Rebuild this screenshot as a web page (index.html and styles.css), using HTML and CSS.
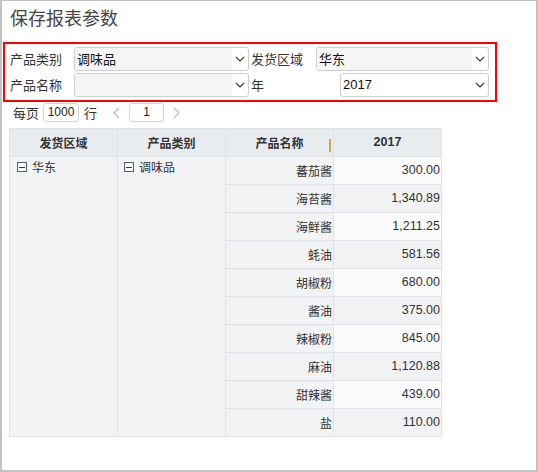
FILE: index.html
```html
<!DOCTYPE html>
<html lang="zh">
<head>
<meta charset="utf-8">
<title>保存报表参数</title>
<link rel="stylesheet" href="styles.css">
</head>
<body>
<div class="page">
  <div class="title">保存报表参数</div>
  <div class="params">
    <div class="prow">
      <span class="lbl w64">产品类别</span>
      <div class="sel w175 filled"><span class="val">调味品</span><span class="arr"><svg width="10" height="6" viewBox="0 0 10 6"><polyline points="0.8,0.8 5,5 9.2,0.8" fill="none" stroke="#333" stroke-width="1.2"/></svg></span></div>
      <span class="lbl w65 ml2">发货区域</span>
      <div class="sel w173 filled"><span class="val">华东</span><span class="arr"><svg width="10" height="6" viewBox="0 0 10 6"><polyline points="0.8,0.8 5,5 9.2,0.8" fill="none" stroke="#333" stroke-width="1.2"/></svg></span></div>
    </div>
    <div class="prow">
      <span class="lbl w64">产品名称</span>
      <div class="sel w175 filled"><span class="val"></span><span class="arr"><svg width="10" height="6" viewBox="0 0 10 6"><polyline points="0.8,0.8 5,5 9.2,0.8" fill="none" stroke="#333" stroke-width="1.2"/></svg></span></div>
      <span class="lbl w89 ml2">年</span>
      <div class="sel w149"><span class="val num">2017</span><span class="arr"><svg width="10" height="6" viewBox="0 0 10 6"><polyline points="0.8,0.8 5,5 9.2,0.8" fill="none" stroke="#333" stroke-width="1.2"/></svg></span></div>
    </div>
  </div>
  <div class="toolbar">
    <span class="tlbl">每页</span>
    <span class="box bsize">1000</span>
    <span class="tlbl row-l">行</span>
    <span class="nav prev"><svg width="7" height="12" viewBox="0 0 7 12"><polyline points="6,1 1,6 6,11" fill="none" stroke="#b8bcc2" stroke-width="1.2"/></svg></span>
    <span class="box bpage">1</span>
    <span class="nav next"><svg width="7" height="12" viewBox="0 0 7 12"><polyline points="1,1 6,6 1,11" fill="none" stroke="#b8bcc2" stroke-width="1.2"/></svg></span>
  </div>
  <div class="grid">
    <div class="hd">发货区域</div>
    <div class="hd">产品类别</div>
    <div class="hd hd-name">产品名称<span class="resize"></span></div>
    <div class="hd num">2017</div>
    <div class="merged c1"><span class="tog"></span>华东</div>
    <div class="merged c2"><span class="tog"></span>调味品</div>
    <div class="name">蕃茄酱</div><div class="v odd">300.00</div>
    <div class="name">海苔酱</div><div class="v">1,340.89</div>
    <div class="name">海鲜酱</div><div class="v odd">1,211.25</div>
    <div class="name">蚝油</div><div class="v">581.56</div>
    <div class="name">胡椒粉</div><div class="v odd">680.00</div>
    <div class="name">酱油</div><div class="v">375.00</div>
    <div class="name">辣椒粉</div><div class="v odd">845.00</div>
    <div class="name">麻油</div><div class="v">1,120.88</div>
    <div class="name">甜辣酱</div><div class="v odd">439.00</div>
    <div class="name">盐</div><div class="v">110.00</div>
  </div>
</div>
</body>
</html>
```
FILE: styles.css
```css
html, body {
  margin: 0;
  padding: 0;
  background: #fff;
}
body {
  font-family: "Noto Sans CJK SC", "Noto Sans", sans-serif;
  color: #333;
}
.page {
  width: 538px;
  height: 472px;
  box-sizing: border-box;
  border: 2px solid #c2c2c2;
  border-top-width: 1px;
  padding-top: 4px;
}
.title {
  height: 24px;
  line-height: 24px;
  font-size: 18px;
  color: #444;
  padding-left: 8px;
}
.params {
  margin: 13px 0 0 1px;
  width: 494px;
  height: 60px;
  box-sizing: border-box;
  border: 2px solid #ff0000;
  padding: 3px 6px 3px 5px;
  display: flex;
  flex-direction: column;
  gap: 2px;
}
.prow {
  display: flex;
  height: 24px;
  align-items: stretch;
}
.lbl {
  font-size: 13px;
  line-height: 24px;
  box-sizing: border-box;
  color: #333;
}
.w64 { width: 64px; }
.w65 { width: 65px; }
.w89 { width: 89px; }
.ml2 { margin-left: 2px; }
.sel {
  box-sizing: border-box;
  height: 24px;
  border: 1px solid #cfcfcf;
  border-radius: 3px;
  display: flex;
  background: #fff;
  overflow: hidden;
}
.w175 { width: 175px; }
.w173 { width: 173px; }
.w149 { width: 149px; }
.sel .val {
  flex: 1;
  font-size: 13px;
  line-height: 22px;
  padding-left: 2px;
  color: #111;
}
.sel.filled .val {
  background: #f5f5f5;
}
.sel .num {
  font-family: "Liberation Sans", sans-serif;
}
.sel .arr {
  width: 16px;
  display: flex;
  align-items: center;
  justify-content: flex-start;
  padding-left: 3px;
  box-sizing: border-box;
}
.toolbar {
  margin: 1px 0 0 11px;
  height: 19px;
  display: flex;
  align-items: center;
  font-size: 13px;
}
.tlbl {
  line-height: 19px;
}
.box {
  box-sizing: border-box;
  height: 19px;
  border: 1px solid #d4d4d4;
  border-radius: 3px;
  font-family: "Liberation Sans", sans-serif;
  font-size: 12px;
  line-height: 17px;
  text-align: center;
  color: #222;
}
.bsize { width: 36px; margin-left: 4px; }
.row-l { margin-left: 5px; }
.bpage { width: 35px; margin-left: 9px; }
.nav { display: flex; align-items: center; }
.prev { margin-left: 16px; }
.next { margin-left: 9px; }
.grid {
  margin: 6px 0 0 7px;
  width: 433px;
  box-sizing: border-box;
  border: 1px solid #dfe2e6;
  background: #dfe2e6;
  display: grid;
  grid-template-columns: repeat(4, 107px);
  grid-template-rows: 27px repeat(10, 27px);
  gap: 1px;
  font-size: 12px;
}
.hd {
  background: #e9ecef;
  font-weight: bold;
  text-align: center;
  line-height: 27px;
  color: #333;
  position: relative;
}
.hd.num {
  font-family: "Liberation Sans", sans-serif;
  font-size: 12.5px;
}
.resize {
  position: absolute;
  right: 2px;
  top: 10px;
  width: 2px;
  height: 13px;
  background: #c9a95e;
}
.merged {
  background: #f1f3f5;
  grid-row: 2 / span 10;
  padding: 1px 0 0 7px;
  line-height: 18px;
  display: flex;
  align-items: flex-start;
}
.c1 { grid-column: 1; }
.c2 { grid-column: 2; padding-left: 6px; }
.tog {
  width: 10px;
  height: 10px;
  box-sizing: border-box;
  border: 1px solid #4d5f7a;
  margin: 4px 5px 0 0;
  position: relative;
  background: #fff;
}
.tog::after {
  content: "";
  position: absolute;
  left: 1px;
  right: 1px;
  top: 3.5px;
  height: 1px;
  background: #2f3d52;
}
.name {
  grid-column: 3;
  background: #f1f3f5;
  text-align: right;
  padding-right: 1px;
  line-height: 27px;
}
.v {
  grid-column: 4;
  background: #f0f2f4;
  text-align: right;
  padding-right: 1px;
  line-height: 27px;
  font-family: "Liberation Sans", sans-serif;
  font-size: 12.5px;
  color: #333;
}
.v.odd {
  background: #fafcfc;
}
```
